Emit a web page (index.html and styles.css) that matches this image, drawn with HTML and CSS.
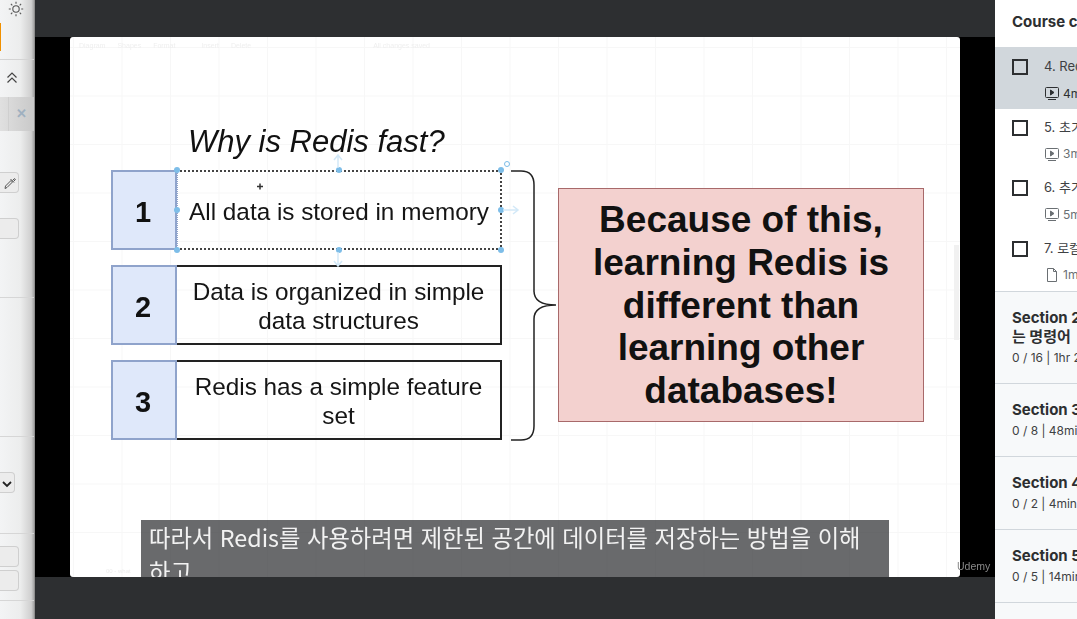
FILE: index.html
```html
<!doctype html>
<html lang="ko">

<head>
    <meta charset="utf-8">
    <title>Redis course</title>
    <link rel="stylesheet" href="styles.css">
</head>

<body>
    <div class="page">
        <!-- Left settings panel, mostly cut off -->
        <aside class="panel">
            <div class="panel-sun">
                <svg width="16" height="16" viewBox="0 0 16 16" fill="none" stroke="#555" stroke-width="1.1">
                    <circle cx="8" cy="8" r="3.2" />
                    <path d="M8 .8v2M8 13.2v2M.8 8h2M13.2 8h2M2.9 2.9l1.4 1.4M11.7 11.7l1.4 1.4M2.9 13.1l1.4-1.4M11.7 4.3l1.4-1.4" />
                </svg>
            </div>
            <div class="panel-orange"></div>
            <div class="panel-collapse">
                <svg width="14" height="14" viewBox="0 0 14 14" fill="none" stroke="#444" stroke-width="1.2">
                    <path d="M2.5 6.5 7 2l4.5 4.5M2.5 11.5 7 7l4.5 4.5" />
                </svg>
            </div>
            <div class="panel-tabs">
                <span class="panel-tab-cell"></span>
                <span class="panel-close">✕</span>
            </div>
            <div class="panel-group panel-group-a">
                <span class="panel-btn panel-picker">
                    <svg width="14" height="14" viewBox="0 0 14 14" fill="none" stroke="#555" stroke-width="1">
                        <path d="M2 12.5 2.5 10 8 4.5 9.5 6 4 11.5zM7.5 3l3.5 3.5M9.5 4.5l1.8-1.8a1 1 0 0 1 1 1L10.5 5.5" />
                    </svg>
                </span>
                <span class="panel-btn panel-wide"></span>
            </div>
            <div class="panel-group panel-group-b"></div>
            <div class="panel-group panel-group-c">
                <span class="panel-select">
                    <svg width="10" height="8" viewBox="0 0 10 8" fill="none" stroke="#222" stroke-width="1.8">
                        <path d="M1 2l4 4 4-4" />
                    </svg>
                </span>
            </div>
            <div class="panel-group panel-group-d">
                <span class="panel-btn panel-wide"></span>
                <span class="panel-btn panel-wide"></span>
            </div>
        </aside>

        <main class="player">
            <div class="player-bar"></div>
            <div class="video">
                <div class="slide">
                    <div class="slide-toolbar">
                        <span>Diagram</span><span>Shapes</span><span>Format</span><span class="tool-gap">Insert</span><span>Delete</span><span class="tool-saved">All changes saved</span>
                    </div>

                    <h2 class="slide-title">Why is Redis fast?</h2>

                    <div class="reasons">
                        <div class="reason reason-selected">
                            <div class="reason-num">1</div>
                            <div class="reason-text">All data is stored in memory</div>
                        </div>
                        <div class="reason">
                            <div class="reason-num">2</div>
                            <div class="reason-text">Data is organized in simple data structures</div>
                        </div>
                        <div class="reason">
                            <div class="reason-num">3</div>
                            <div class="reason-text">Redis has a simple feature set</div>
                        </div>
                    </div>

                    <!-- selection handles around the first box -->
                    <i class="handle col-l row-t"></i>
                    <i class="handle col-c row-t"></i>
                    <i class="handle col-r row-t"></i>
                    <i class="handle col-l row-m"></i>
                    <i class="handle col-r row-m"></i>
                    <i class="handle col-l row-b"></i>
                    <i class="handle col-c row-b"></i>
                    <i class="handle col-r row-b"></i>
                    <svg class="slide-marks" width="460" height="240" viewBox="0 0 460 240" fill="none">
                        <path d="M268 131v-12M264 123l4-5 4 5M268 215v13M264 224l4 5 4-5M433 173h14M443 169l5 4-5 4" stroke="#d3e9f8" stroke-width="1.5" />
                        <circle cx="437" cy="127" r="2.5" stroke="#7dbde8" />
                        <path d="M187 149.5h6M190 146.5v6" stroke="#333" stroke-width="1.5" />
                    </svg>

                    <svg class="brace" width="48" height="272" viewBox="0 0 48 272" fill="none" stroke="#222" stroke-width="1.5">
                        <path d="M2 1h10q13 0 13 14v106q0 14 22 14q-22 0-22 14v107q0 14-13 14H2" />
                    </svg>

                    <div class="callout">Because of this, learning Redis is different than learning other databases!</div>
                    <div class="slide-scroll"></div>
                    <div class="slide-tabs"><span>00 - what</span></div>
                </div>
                <div class="watermark">Udemy</div>
                <div class="caption">따라서 Redis를 사용하려면 제한된 공간에 데이터를 저장하는 방법을 이해하고</div>
            </div>
            <div class="player-foot"></div>
        </main>

        <aside class="sidebar">
            <div class="sidebar-head">Course content</div>
            <ul class="lectures">
                <li class="lecture lecture-current">
                    <span class="check"></span>
                    <div class="lecture-body">
                        <div class="lecture-name">4. Redis</div>
                        <div class="lecture-meta">
                            <svg width="16" height="16" viewBox="0 0 16 16" fill="none" stroke="currentColor"><rect x="1.5" y="2.5" width="13" height="10" rx="1" /><path d="M4 14.5h8" /><path d="M6.5 5l3.5 2.5-3.500 2.500z" fill="currentColor" /></svg>
                            <span>4min</span>
                        </div>
                    </div>
                </li>
                <li class="lecture">
                    <span class="check"></span>
                    <div class="lecture-body">
                        <div class="lecture-name">5. 초기</div>
                        <div class="lecture-meta">
                            <svg width="16" height="16" viewBox="0 0 16 16" fill="none" stroke="currentColor"><rect x="1.5" y="2.5" width="13" height="10" rx="1" /><path d="M4 14.5h8" /><path d="M6.5 5l3.5 2.5-3.500 2.500z" fill="currentColor" /></svg>
                            <span>3min</span>
                        </div>
                    </div>
                </li>
                <li class="lecture">
                    <span class="check"></span>
                    <div class="lecture-body">
                        <div class="lecture-name">6. 추가</div>
                        <div class="lecture-meta">
                            <svg width="16" height="16" viewBox="0 0 16 16" fill="none" stroke="currentColor"><rect x="1.5" y="2.5" width="13" height="10" rx="1" /><path d="M4 14.5h8" /><path d="M6.5 5l3.5 2.5-3.500 2.500z" fill="currentColor" /></svg>
                            <span>5min</span>
                        </div>
                    </div>
                </li>
                <li class="lecture">
                    <span class="check"></span>
                    <div class="lecture-body">
                        <div class="lecture-name">7. 로컬</div>
                        <div class="lecture-meta">
                            <svg width="16" height="16" viewBox="0 0 16 16" fill="none" stroke="currentColor"><path d="M3.5 1.5h6l3 3v10h-9z" /><path d="M9.5 1.5v3h3" /></svg>
                            <span>1min</span>
                        </div>
                    </div>
                </li>
            </ul>
            <div class="section section-tall">
                <div class="section-name">Section 2: 자주 사용되<br>는 명령어</div>
                <div class="section-meta">0 / 16 | 1hr 20min</div>
            </div>
            <div class="section">
                <div class="section-name">Section 3: Redis</div>
                <div class="section-meta">0 / 8 | 48min</div>
            </div>
            <div class="section">
                <div class="section-name">Section 4: Redis</div>
                <div class="section-meta">0 / 2 | 4min</div>
            </div>
            <div class="section">
                <div class="section-name">Section 5: Redis</div>
                <div class="section-meta">0 / 5 | 14min</div>
            </div>
        </aside>
    </div>
</body>

</html>
```

FILE: styles.css
```css
html,
body {
    margin: 0;
    height: 100%;
    overflow: hidden;
}

body {
    font-family: 'Liberation Sans', 'Noto Sans CJK KR', sans-serif;
    background-color: #2d2f31;
}

.page {
    display: flex;
    width: 1077px;
    height: 619px;
}

/***** left panel *****/
.panel {
    position: relative;
    flex: 0 0 35px;
    height: 619px;
    box-sizing: border-box;
    overflow: hidden;
    background: linear-gradient(90deg, #f3f4f5 0%, #eceded 60%, #cfcfcf 92%, #a5a5a5 100%);
    border-right: 1px solid #8f8f8f;
}

.panel-sun {
    position: absolute;
    top: 1px;
    left: 8px;
}

.panel-orange {
    position: absolute;
    top: 23px;
    left: 0;
    width: 1px;
    height: 28px;
    background-color: #f09000;
}

.panel-collapse {
    position: absolute;
    top: 59px;
    left: 0;
    right: 0;
    height: 38px;
    box-sizing: border-box;
    padding: 11px 0 0 5px;
    border-top: 1px solid #d4d4d4;
}

.panel-tabs {
    position: absolute;
    top: 97px;
    left: 0;
    right: 0;
    height: 34px;
    display: flex;
    background: linear-gradient(90deg, #e0e0e0, #c9c9c9);
}

.panel-tab-cell {
    width: 8px;
    border-right: 1px solid #cfcfcf;
}

.panel-close {
    flex: 1;
    text-align: center;
    color: #9fb0c0;
    font-size: 13px;
    font-weight: bold;
    line-height: 34px;
}

.panel-group {
    position: absolute;
    left: 0;
    right: 0;
    box-sizing: border-box;
    border-bottom: 1px solid #d6d6d6;
}

.panel-group-a {
    top: 131px;
    height: 167px;
    padding-top: 41px;
}

.panel-group-b {
    top: 298px;
    height: 139px;
}

.panel-group-c {
    top: 437px;
    height: 97px;
    padding-top: 35px;
}

.panel-group-d {
    top: 534px;
    height: 67px;
    padding-top: 12px;
}

.panel-btn {
    display: block;
    box-sizing: border-box;
    width: 19px;
    height: 21px;
    margin-bottom: 3px;
    background-color: #ececec;
    border: 1px solid #cfcfcf;
    border-left: 0;
    border-radius: 0 4px 4px 0;
}

.panel-picker {
    margin-bottom: 25px;
    padding: 3px 0 0 3px;
}

.panel-select {
    display: block;
    box-sizing: border-box;
    width: 15px;
    height: 21px;
    padding-left: 2px;
    line-height: 20px;
    background-color: #ececec;
    border: 1px solid #cfcfcf;
    border-left: 0;
    border-radius: 0 4px 4px 0;
}

/***** player *****/
.player {
    flex: 0 0 960px;
    display: flex;
    flex-direction: column;
}

.player-bar {
    flex: 0 0 37px;
    background-color: #2d2f31;
}

.player-foot {
    flex: 0 0 42px;
    background-color: #2d2f31;
}

.video {
    position: relative;
    flex: 0 0 540px;
    overflow: hidden;
    background-color: #000;
}

.slide {
    position: absolute;
    top: 0;
    left: 35px;
    width: 890px;
    height: 540px;
    overflow: hidden;
    border-radius: 3px;
    background-color: #fff;
    background-image:
        linear-gradient(#f7f7f7 1px, transparent 1px),
        linear-gradient(90deg, #f7f7f7 1px, transparent 1px);
    background-size: 48.5px 48.5px;
    background-position: 3px 10px;
    filter: blur(0.35px);
}

.slide-toolbar {
    display: flex;
    gap: 12px;
    padding: 5px 0 0 9px;
    font-size: 7px;
    color: #efefef;
}

.tool-gap {
    margin-left: 14px;
}

.tool-saved {
    margin-left: 110px;
}

.slide-title {
    position: absolute;
    top: 86px;
    left: 118px;
    margin: 0;
    font-size: 31px;
    font-style: italic;
    font-weight: normal;
    line-height: 38px;
    color: #111;
}

.reasons {
    position: absolute;
    top: 133px;
    left: 41px;
    display: flex;
    flex-direction: column;
    gap: 15px;
}

.reason {
    display: flex;
    width: 391px;
    height: 80px;
}

.reason-num {
    flex: 0 0 66px;
    box-sizing: border-box;
    padding-right: 2px;
    border: 2px solid #8fa3cb;
    background-color: #dfe8fa;
    color: #111;
    font-size: 29px;
    font-weight: bold;
    line-height: 80px;
    text-align: center;
}

.reason-text {
    flex: 1;
    display: flex;
    align-items: center;
    justify-content: center;
    box-sizing: border-box;
    padding: 2px 8px 0;
    border: 2px solid #222;
    border-left: 0;
    font-size: 24.3px;
    line-height: 29px;
    text-align: center;
    color: #151515;
}

.reason-selected .reason-text {
    border: 2px dotted #444;
    border-left: 1px dotted #8fa3cb;
}

.handle {
    position: absolute;
    width: 6px;
    height: 6px;
    border-radius: 50%;
    background-color: #7dbde8;
}

.col-l {
    left: 104px;
}

.col-c {
    left: 266px;
}

.col-r {
    left: 428px;
}

.row-t {
    top: 130px;
}

.row-m {
    top: 170px;
}

.row-b {
    top: 210px;
}

.slide-marks {
    position: absolute;
    top: 0;
    left: 0;
    pointer-events: none;
}

.brace {
    position: absolute;
    top: 133px;
    left: 439px;
}

.callout {
    position: absolute;
    top: 151px;
    left: 488px;
    width: 366px;
    height: 234px;
    display: flex;
    align-items: center;
    justify-content: center;
    box-sizing: border-box;
    padding: 2px 10px 0;
    background-color: #f3d1cf;
    border: 1.5px solid #a8696a;
    color: #111;
    font-size: 37px;
    font-weight: bold;
    line-height: 42.8px;
    text-align: center;
}

.slide-scroll {
    position: absolute;
    top: 208px;
    right: 1px;
    width: 5px;
    height: 95px;
    background-color: #f1f1f1;
}

.slide-tabs {
    position: absolute;
    bottom: 3px;
    left: 36px;
    font-size: 6px;
    color: #ececec;
}

.watermark {
    position: absolute;
    top: 522px;
    left: 922px;
    font-size: 10.5px;
    line-height: 14px;
    color: #8a8a8a;
}

.caption {
    position: absolute;
    top: 483px;
    left: 106px;
    width: 748px;
    box-sizing: border-box;
    padding: 0 8px;
    background-color: rgba(58, 59, 62, 0.76);
    color: #f2f2f2;
    font-family: 'Noto Sans CJK KR', sans-serif;
    font-size: 23.3px;
    line-height: 34px;
}

/***** course sidebar *****/
.sidebar {
    flex: 0 0 82px;
    height: 619px;
    overflow: hidden;
    background-color: #f7f9fa;
    color: #2d2f31;
}

.sidebar-head {
    height: 48px;
    box-sizing: border-box;
    padding: 13px 0 0 17px;
    background-color: #fff;
    border-bottom: 1px solid #d1d7dc;
    font-family: 'Inter', 'Noto Sans CJK KR', sans-serif;
    font-size: 15px;
    font-weight: 700;
    line-height: 18px;
    white-space: nowrap;
}

.lectures {
    margin: 0;
    padding: 0 0 1px;
    list-style: none;
    background-color: #fff;
    border-bottom: 1px solid #d1d7dc;
}

.lecture {
    display: flex;
    height: 60.5px;
    box-sizing: border-box;
    padding: 11px 0 0 17px;
}

.lecture-current {
    background-color: #d1d7dc;
}

.check {
    flex: 0 0 auto;
    box-sizing: border-box;
    width: 16px;
    height: 16px;
    border: 2px solid #2d2f31;
    background-color: transparent;
}

.lecture-body {
    margin-top: -1px;
    padding-left: 16px;
    white-space: nowrap;
}

.lecture-name {
    font-family: 'Inter', 'Noto Sans CJK KR', sans-serif;
    font-size: 13px;
    line-height: 16px;
    color: #3e4143;
}

.lecture-meta {
    display: flex;
    align-items: center;
    gap: 3px;
    margin-top: 11px;
    font-family: 'Inter', sans-serif;
    font-size: 12px;
    color: #6a6f73;
}

.lecture-current .lecture-meta {
    color: #2d2f31;
}

.section {
    height: 73px;
    box-sizing: border-box;
    padding: 16px 0 0 17px;
    border-bottom: 1px solid #d1d7dc;
    white-space: nowrap;
}

.section-tall {
    height: 92px;
}

.section-name {
    font-family: 'Inter', 'Noto Sans CJK KR', sans-serif;
    font-size: 15px;
    font-weight: 700;
    line-height: 19px;
}

.section-meta {
    margin-top: 4px;
    font-family: 'Inter', sans-serif;
    font-size: 12px;
    line-height: 16px;
    color: #3e4143;
}
```
